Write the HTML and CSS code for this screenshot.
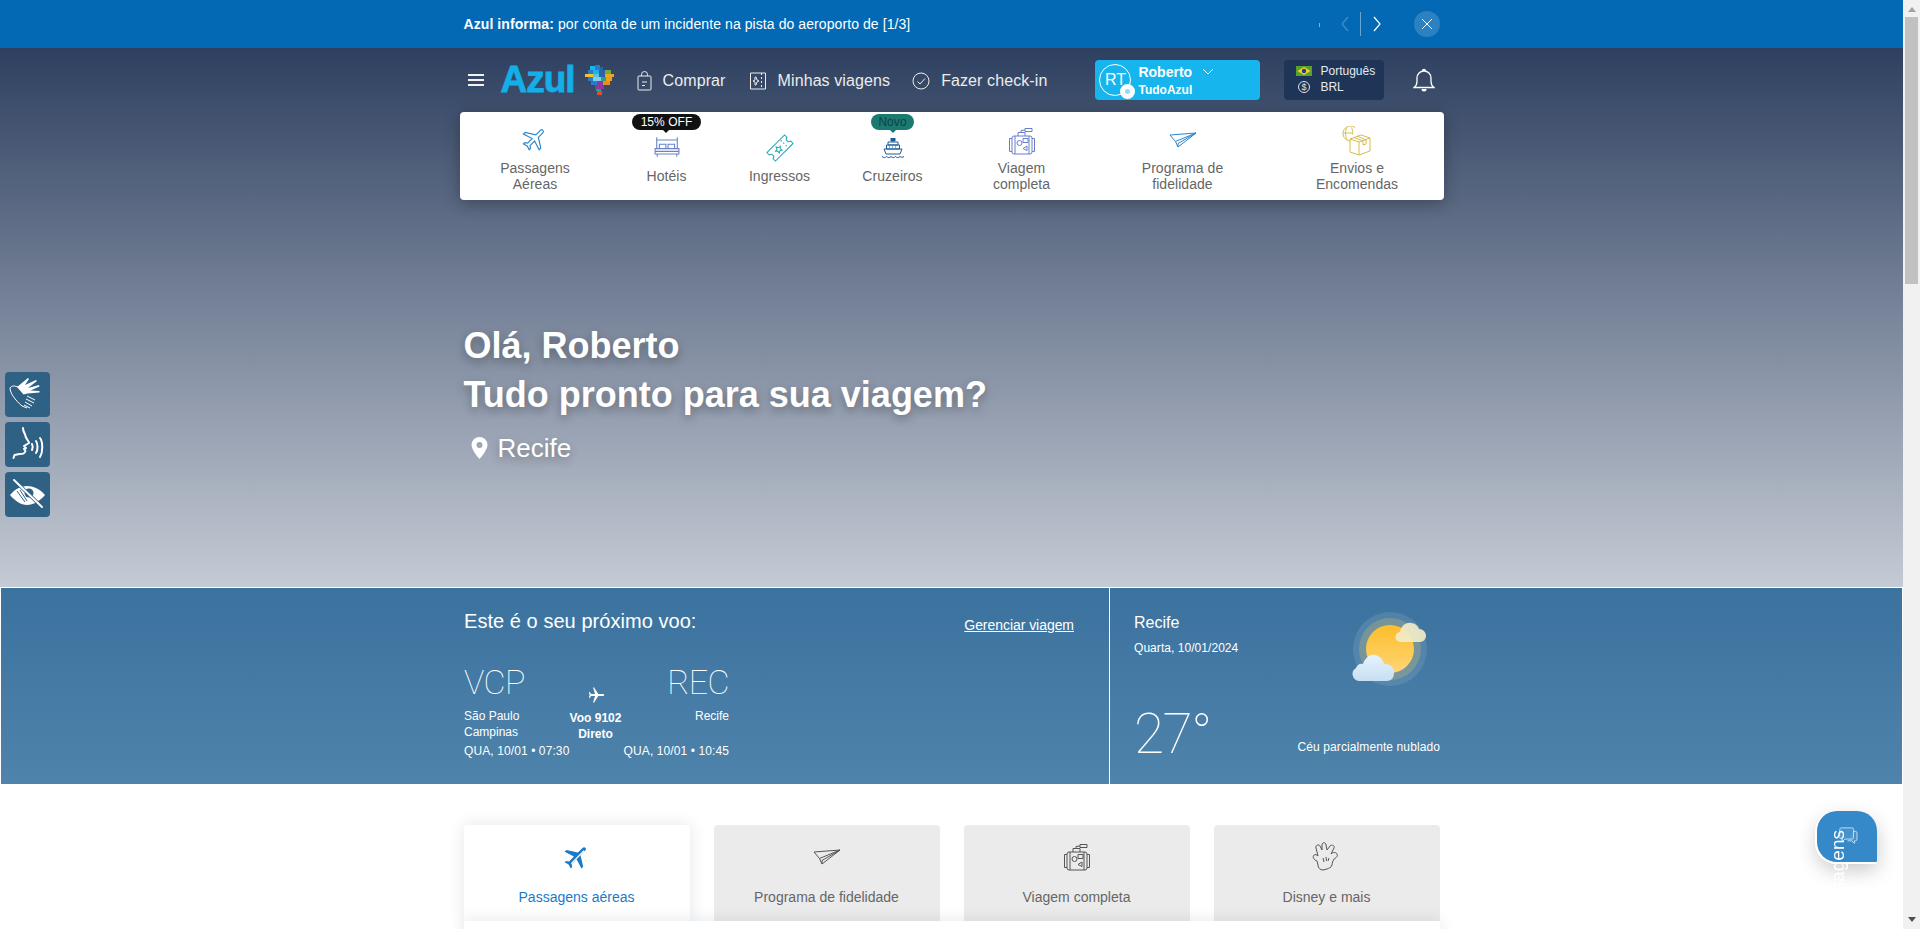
FILE: index.html
```html
<!DOCTYPE html>
<html lang="pt-BR">
<head>
  <meta charset="UTF-8">
  <title>Azul Linhas Aéreas</title>
  <meta name="viewport" content="width=device-width, initial-scale=1.0">
  <link rel="stylesheet" href="styles.css">
</head>
<body>
  <svg class="defs" width="0" height="0">
    <symbol id="i-plane" viewBox="0 0 24 24">
      <path d="M21 16v-2l-8-5V3.5c0-.83-.67-1.5-1.5-1.5S10 2.67 10 3.5V9l-8 5v2l8-2.5V19l-2 1.5V22l3.5-1 3.5 1v-1.5L13 19v-5.5l8 2.5z"/>
    </symbol>
    <symbol id="i-paper" viewBox="0 0 28 16">
      <path d="M1 3 27 1 9 15 6.5 9.5zM6.5 9.5 27 1 9 11.5 9 15"/>
    </symbol>
    <symbol id="i-suitcase" viewBox="0 0 28 30">
      <path d="M6 10h16a2 2 0 0 1 2 2v14a2 2 0 0 1-2 2H6a2 2 0 0 1-2-2V12a2 2 0 0 1 2-2zM7 10v18M21 10v18M1.500 12.500v13M26.500 12.500v13M4 12.500H1.500M4 25.500H1.500M24 12.500h2.500M24 25.500h2.500"/>
      <path d="M10 10V6.500h7V10M13 6.500V4.500l4-.5M17 2.500h7v3h-7z"/>
      <circle cx="11.500" cy="17" r="2.500"/>
      <path d="M15 12.500h5v4h-5zM19 20v4.500l-4-2z"/>
    </symbol>
  </svg>

  <div class="page">
    <div class="notice">
      <div class="wrap notice-in">
        <p class="notice-text"><b>Azul informa:</b> por conta de um incidente na pista do aeroporto de [1/3]</p>
        <div class="notice-ctrl">
          <span class="tick"></span>
          <svg class="chev dim" width="10" height="16" viewBox="0 0 10 16"><path d="M8 1 2 8l6 7"/></svg>
          <span class="sep"></span>
          <svg class="chev" width="10" height="16" viewBox="0 0 10 16"><path d="M2 1l6 7-6 7"/></svg>
          <span class="close">
            <svg width="12" height="12" viewBox="0 0 12 12"><path d="M1 1l10 10M11 1 1 11"/></svg>
          </span>
        </div>
      </div>
    </div>

    <section class="hero">
      <header class="wrap nav">
        <div class="nav-left">
          <span class="burger"><i></i><i></i><i></i></span>
          <span class="logo">Azul</span>
          <svg class="map" width="30" height="30" viewBox="0 0 30 30">
            <path fill="#19b5e8" d="M5 1h5v4H5z"/><path fill="#2a7cc8" d="M10 0h5v5h-5z"/><path fill="#2a63a8" d="M15 2h3v3h-3z"/>
            <path fill="#2a7cc8" d="M3 5h5v4H3z"/><path fill="#19b5e8" d="M8 5h6v4H8z"/><path fill="#2a63a8" d="M14 5h6v4h-6z"/><path fill="#76ab3f" d="M20 5h6v4h-6z"/>
            <path fill="#f3c62d" d="M0 9h8v3H0z"/><path fill="#5fc3e0" d="M8 9h6v3H8z"/><path fill="#2a63a8" d="M14 9h6v3h-6z"/><path fill="#e8a81c" d="M20 9h9v3h-9z"/>
            <path fill="#2a7cc8" d="M3 12h5v4H3z"/><path fill="#7fd0e8" d="M8 12h8v4H8z"/><path fill="#2c9e8f" d="M16 12h5v4h-5z"/><path fill="#f0a01e" d="M21 12h6v4h-6z"/>
            <path fill="#2a7cc8" d="M6 16h6v4H6z"/><path fill="#8a3a9c" d="M12 16h6v4h-6z"/><path fill="#f08a1e" d="M18 16h7v4h-7z"/>
            <path fill="#8a3a9c" d="M10 20h9v4h-9z"/><path fill="#2c9e8f" d="M11 24h5v2h-5z"/>
            <path fill="#e8482c" d="M12 26h5v4h-5z"/>
          </svg>
        </div>
        <nav class="nav-links">
          <a class="nav-link nl-buy">
            <svg width="15" height="20" viewBox="0 0 15 20"><path d="M2 5h11a1 1 0 0 1 1 1v12a1 1 0 0 1-1 1H2a1 1 0 0 1-1-1V6a1 1 0 0 1 1-1zM4.500 5V3.500a3 3 0 0 1 6 0V5M5 11h5M5 14.500h3"/></svg>
            Comprar
          </a>
          <a class="nav-link nl-trips">
            <svg width="18" height="18" viewBox="0 0 18 18"><path d="M1.500 1h15v16h-15zM12.500 1v2M12.500 5v2M12.500 9v2M12.500 13v2M4 9l2-1V5l1 0 1 3 2 1-2 1-1 3-1 0v-3z"/></svg>
            Minhas viagens
          </a>
          <a class="nav-link nl-check">
            <svg width="18" height="18" viewBox="0 0 18 18"><circle cx="9" cy="9" r="8"/><path d="M5.500 9.500l2.500 2.500 5-5.500"/></svg>
            Fazer check-in
          </a>
        </nav>
        <div class="user">
          <span class="avatar">RT<span class="avatar-badge"></span></span>
          <span class="user-txt">
            <b class="user-name">Roberto
              <svg width="12" height="7" viewBox="0 0 12 7"><path d="M1 1l5 5 5-5"/></svg>
            </b>
            <b class="user-club">TudoAzul</b>
          </span>
        </div>
        <div class="lang">
          <span class="lang-row">
            <svg class="lang-ico" width="16" height="10" viewBox="0 0 16 10"><path fill="#5aa02c" d="M0 0h16v10H0z"/><path fill="#f6d21f" d="M8 1l6.500 4L8 9 1.500 5z"/><circle cx="8" cy="5" r="2.200" fill="#1f3f8f"/></svg>
            Português
          </span>
          <span class="lang-row">
            <svg class="lang-ico" width="16" height="12" viewBox="0 0 16 12"><circle cx="8" cy="6" r="5.500" fill="none" stroke="#dfe4ea"/><text x="8" y="9" class="coin">$</text></svg>
            BRL
          </span>
        </div>
        <svg class="bell" width="22" height="25" viewBox="0 0 22 25"><path d="M1 19.500c2-1.500 3-3 3-6V10a7 7 0 0 1 14 0v3.500c0 3 1 4.500 3 6zM9.500 3a1.500 1.500 0 0 1 3 0"/><path class="bell-fill" d="M8.500 21h5a2.500 2.500 0 0 1-5 0z"/></svg>
      </header>

      <div class="menu">
        <a class="menu-item">
          <svg class="mi-plane" width="28" height="28"><use href="#i-plane"/></svg>
          <span>Passagens<br>Aéreas</span>
        </a>
        <a class="menu-item">
          <em class="flag flag-off">15% OFF</em>
          <svg class="mi-bed" width="26" height="24" viewBox="0 0 24 22"><path d="M2.500 13V2M21.500 13V2M2.500 4.500h19M5 12V8.500h6V12M13 12V8.500h6V12M1 12.500h22v5H1zM1 15h22M3 17.500V20M21 17.500V20"/></svg>
          <span>Hotéis</span>
        </a>
        <a class="menu-item">
          <svg class="mi-ticket" width="28" height="28" viewBox="0 0 28 28"><g transform="rotate(-45 14 14)"><path d="M1.500 8h25v3.500a2.500 2.500 0 0 0 0 5V20h-25v-3.500a2.500 2.500 0 0 0 0-5z"/><path d="M12 10.500l1 2.200 2.400.3-1.700 1.600.4 2.400-2.100-1.200-2.100 1.200.4-2.400-1.700-1.600 2.400-.3zM20 9v1.500M20 12.500V14M20 16v1.500"/></g></svg>
          <span>Ingressos</span>
        </a>
        <a class="menu-item">
          <em class="flag flag-new">Novo</em>
          <svg class="mi-ship" width="24" height="22" viewBox="0 0 24 22"><path class="solid" d="M10 0h4v3h-4z"/><path d="M7 4h10v3H7zM5.500 7h13v4h-13zM3 11h18l-2 5H5z"/><path d="M8 9h1M11 9h1M14 9h1M1 18.500c2 1.500 3 1.500 4.500 0 1.500 1.500 3 1.500 4.500 0 1.500 1.500 3 1.500 4.500 0 1.500 1.500 3 1.500 4.500 0 1 1 2.500 1 4 0"/></svg>
          <span>Cruzeiros</span>
        </a>
        <a class="menu-item">
          <svg class="mi-suit" width="28" height="30"><use href="#i-suitcase"/></svg>
          <span>Viagem<br>completa</span>
        </a>
        <a class="menu-item">
          <svg class="mi-paper" width="28" height="16"><use href="#i-paper"/></svg>
          <span>Programa de<br>fidelidade</span>
        </a>
        <a class="menu-item">
          <svg class="mi-box" width="30" height="30" viewBox="0 0 30 30"><path d="M8 13 17 16l11-4v13l-11 4-9-3zM17 16v13M28 12l-9-3-11 4M12 11.500l9 3.500v4l3-1v-4L15 10"/><path d="M8 15A7.500 7.500 0 1 1 13 1.500M1 7h9M5 1.500c-2 3-2 8 0 12M9.500 1.500c1 2 1.500 4 1 7"/></svg>
          <span>Envios e<br>Encomendas</span>
        </a>
      </div>

      <div class="wrap greet">
        <h1>Olá, Roberto<br>Tudo pronto para sua viagem?</h1>
        <p class="place">
          <svg width="17" height="22" viewBox="0 0 17 22"><path fill-rule="evenodd" d="M8.500 0A8 8 0 0 0 .5 8c0 5 8 14 8 14s8-9 8-14a8 8 0 0 0-8-8zm0 11a3 3 0 1 1 0-6 3 3 0 0 1 0 6z"/></svg>
          Recife
        </p>
      </div>
    </section>

    <section class="band">
      <div class="flight">
        <div class="flight-in">
          <div class="flight-head">
            <h2>Este é o seu próximo voo:</h2>
            <a class="manage">Gerenciar viagem</a>
          </div>
          <div class="route">
            <div class="stop">
              <strong class="iata">VCP</strong>
              <span class="city">São Paulo<br>Campinas</span>
              <span class="when">QUA, 10/01 • 07:30</span>
            </div>
            <div class="leg">
              <svg width="18" height="18" viewBox="0 0 24 24"><path d="M23 12c0-.8-1-1.200-2-1.200h-6L9.500 2H8l2.800 8.800H5.500L3.500 8H2.500l1 4-1 4h1l2-2.800h5.300L8 22h1.500l5.500-8.800h6c1 0 2-.4 2-1.200z"/></svg>
              <span>Voo 9102<br>Direto</span>
            </div>
            <div class="stop stop-end">
              <strong class="iata">REC</strong>
              <span class="city">Recife<br>&nbsp;</span>
              <span class="when">QUA, 10/01 • 10:45</span>
            </div>
          </div>
        </div>
      </div>
      <div class="weather">
        <div class="weather-top">
          <div>
            <h3>Recife</h3>
            <p class="date">Quarta, 10/01/2024</p>
          </div>
          <svg class="sun" width="78" height="76" viewBox="0 0 78 76">
            <defs>
              <linearGradient id="sun-g" x1="0" y1="0" x2="0" y2="1"><stop offset="0" stop-color="#fdbd2c"/><stop offset="1" stop-color="#fdd676"/></linearGradient>
              <linearGradient id="cloud-g" x1="0" y1="0" x2="0" y2="1"><stop offset="0" stop-color="#e6f3fc"/><stop offset="1" stop-color="#c6dff3"/></linearGradient>
            </defs>
            <circle cx="38" cy="37" r="37" fill="#fff" opacity=".1"/>
            <circle cx="38" cy="37" r="31" fill="#f6d35c" opacity=".22"/>
            <circle cx="38" cy="37" r="24" fill="url(#sun-g)"/>
            <path fill="#f1ecc8" opacity=".92" d="M49 30a5 5 0 0 1-1-10c1-6 6-10 11-9 4 0 7 3 8 6 4 0 7 3 7 7 0 3-3 6-6 6z"/>
            <path fill="url(#cloud-g)" d="M7 69a7 7 0 0 1-3-13c1-3 4-5 7-4 2-6 7-10 12-9 5 1 8 5 9 9 6 0 10 3 10 9 0 5-3 8-7 8z"/>
          </svg>
        </div>
        <div class="weather-low">
          <strong class="temp">27°</strong>
          <span class="sky">Céu parcialmente nublado</span>
        </div>
      </div>
    </section>

    <section class="wrap tabs">
      <a class="tab on">
        <svg class="tab-plane" width="30" height="30" viewBox="0 0 24 24">
          <path d="M21 16v-2l-8-5V3.500c0-.83-.67-1.500-1.500-1.500S10 2.670 10 3.500V9l-8 5v2l8-2.500V19l-2 1.500V22l3.500-1 3.500 1v-1.500L13 19v-5.500l8 2.500z"/>
          <path class="streak" d="M12.500 4.500V19"/>
        </svg>
        Passagens aéreas
      </a>
      <a class="tab">
        <svg class="tab-ico-paper" width="28" height="16"><use href="#i-paper"/></svg>
        Programa de fidelidade
      </a>
      <a class="tab">
        <svg class="tab-ico" width="28" height="30"><use href="#i-suitcase"/></svg>
        Viagem completa
      </a>
      <a class="tab">
        <svg class="tab-ico" width="30" height="30" viewBox="0 0 30 30"><path d="M11 28c-3 0-5-2-5-5l-1-4c-3-1-5-4-3-6 1-1 3 0 4 1L4 6c-1-3 3-4 4-2l2 4V3c0-3 4-3 4 0l1 5 3-4c2-2 5 0 4 2l-3 6c2-2 5-2 6 0 1 2-1 4-3 5-1 2-2 4-2 6-1 3-3 3-5 4z"/><path d="M11 16l1 4M14 15l.5 4M17 16l-1 3"/></svg>
        Disney e mais
      </a>
    </section>
    <div class="wrap panel"></div>
  </div>

  <aside class="scrollbar">
    <i class="arrow up"></i>
    <i class="thumb"></i>
    <i class="arrow down"></i>
  </aside>

  <div class="a11y">
    <a class="a11y-btn">
      <svg width="45" height="45" viewBox="0 0 45 45">
        <path class="s-fill" d="M12 15l11-9 1 1-4 6 11-5 1 1-9 7 11-3 .5 1.500-9 4 9 .5 0 1.500-12 1-4 1z"/>
        <path class="s-line" d="M5 16c2-3 5-2 8-1M5 16c0 5 5 12 12 18M17 34l5 2M22 24l8 4M21 27l8 4M20 30l7 4M19 33l6 3"/>
      </svg>
    </a>
    <a class="a11y-btn">
      <svg width="45" height="45" viewBox="0 0 45 45">
        <path class="s-thick" d="M18 6c0 4 2 5 2.500 8s3.500 5 3.500 7l-5 3 2 2-2 1 1.500 2c-1 3-3 3-6 3l-5 1-1 3"/>
        <path class="s-thick" d="M27 22c1 2 1 4 0 6M31 19c2 3 2 9 0 12M35 16c3 4 3 14 0 19"/>
      </svg>
    </a>
    <a class="a11y-btn">
      <svg width="45" height="45" viewBox="0 0 45 45">
        <path class="s-fill" d="M5 23c5-6 11-9 17-9s13 3 18 9c-5 6-12 10-18 10S10 29 5 23z"/>
        <circle cx="24" cy="21" r="4.500" fill="#2e6184"/>
        <path class="s-hatch" d="M12 19l8 11M15 18l7 11M18 17l3 4"/>
        <path class="s-cut" d="M9 8l28 27"/>
        <path class="s-thick" d="M9 8l28 27"/>
      </svg>
    </a>
  </div>

  <a class="fab">
    <svg width="21" height="19" viewBox="0 0 24 22"><path d="M5 1h12a2 2 0 0 1 2 2v9a2 2 0 0 1-2 2H9l-3 3v-3H5a2 2 0 0 1-2-2V3a2 2 0 0 1 2-2z"/><path d="M19 5h2a2 2 0 0 1 2 2v7a2 2 0 0 1-2 2h-1v3l-3-3h-5"/></svg>
    <span class="fab-text">Mensagens</span>
  </a>
</body>
</html>
```

FILE: styles.css
```css
* { box-sizing: border-box; }
html, body { margin: 0; height: 929px; overflow: hidden; }
body { display: flex; font-family: "Liberation Sans", Arial, sans-serif; background: #fff; color: #666; }
a { color: inherit; text-decoration: none; }
p, h1, h2, h3 { margin: 0; font-weight: normal; }
.defs { position: absolute; }

.page { width: 1903px; flex: none; }
.wrap { width: 976px; margin: 0 auto; }

/* aviso */
.notice { height: 48px; background: #0369b5; color: #fff; }
.notice-in { height: 48px; display: flex; align-items: center; justify-content: space-between; }
.notice-text { font-size: 14px; letter-spacing: .08px; }
.notice-ctrl { display: flex; align-items: center; }
.tick { width: 1px; height: 4px; margin-top: 2px; background: rgba(255,255,255,.5); }
.chev { margin-left: 20px; fill: none; stroke: #fff; stroke-width: 1.2; }
.chev.dim { opacity: .25; }
.sep { width: 1px; height: 24px; margin-left: 10px; background: rgba(255,255,255,.4); }
.sep + .chev { margin-left: 11px; }
.close { width: 26px; height: 26px; margin-left: 32px; border-radius: 50%; background: rgba(255,255,255,.16); display: flex; align-items: center; justify-content: center; }
.close svg { fill: none; stroke: #fff; stroke-width: 1; }

/* hero */
.hero { height: 539px; background: linear-gradient(#2e4060, #c5cbd5); }
.nav { height: 64px; padding-top: 12px; display: flex; align-items: flex-start; color: #ececec; }
.nav-left { display: flex; align-items: center; height: 40px; padding-left: 4px; }
.burger { width: 16px; display: flex; flex-direction: column; gap: 3.5px; }
.burger i { height: 1.500px; background: #f2f2f2; }
.logo { margin-left: 17px; font-size: 37px; font-weight: bold; letter-spacing: -1px; color: #14aee9; line-height: 42px; -webkit-text-stroke: .8px #14aee9; }
.map { margin: 0 0 0 10px; }
.nav-links { display: flex; height: 40px; align-items: center; margin: 1px 0 0 22px; }
.nav-link { display: flex; align-items: center; font-size: 16px; letter-spacing: .1px; }
.nav-link svg { fill: none; stroke: #ececec; stroke-width: 1; margin-right: 11px; }
.nl-trips { margin-left: 23px; }
.nl-check { margin-left: 22px; }
.user { width: 165px; height: 40px; margin-left: 48px; padding-left: 4px; display: flex; align-items: center; background: #17b5ee; border-radius: 4px; color: #fff; }
.avatar { position: relative; width: 32px; height: 32px; border: 1px solid #fff; border-radius: 50%; font-size: 16px; line-height: 30px; text-align: center; }
.avatar-badge { position: absolute; right: -5px; bottom: -4px; width: 15px; height: 15px; border: 3px solid #fff; border-radius: 50%; background: #8fdaf6; box-shadow: inset 0 0 0 2px #fff; }
.user-txt { display: flex; flex-direction: column; margin-left: 7px; }
.user-name { font-size: 14px; line-height: 18px; }
.user-name svg { margin-left: 6px; fill: none; stroke: #fff; stroke-width: 1; vertical-align: 2px; }
.user-club { font-size: 12px; line-height: 14px; margin-top: 2px; }
.lang { width: 100px; height: 40px; margin-left: 24px; padding: 3px 0 0 12px; background: #1e3557; border-radius: 4px; font-size: 12px; color: #e6e9ee; }
.lang-row { display: flex; align-items: center; height: 16px; }
.lang-ico { margin-right: 8px; }
.coin { font: 9px "Liberation Sans", sans-serif; fill: #dfe4ea; text-anchor: middle; }
.bell { margin: 8px 0 0 29px; fill: none; stroke: #fff; stroke-width: 1.300; }
.bell-fill { fill: #fff; stroke: none; }

/* menu de produtos */
.menu { width: 984px; height: 88px; margin: 0 auto; display: grid; grid-template-columns: 151px 112px 114px 112px 146px 176px 173px; background: #fff; border-radius: 4px; box-shadow: 0 4px 16px rgba(0,0,0,.3); }
.menu-item { position: relative; display: flex; flex-direction: column; align-items: center; font-size: 14px; letter-spacing: .05px; line-height: 16px; text-align: center; color: #666; }
.menu-item svg { position: absolute; fill: none; stroke-width: 1; }
.menu-item span { margin-top: 48px; }
.menu-item:nth-child(2) span, .menu-item:nth-child(3) span, .menu-item:nth-child(4) span { margin-top: 56px; }
.mi-plane { top: 13px; stroke: #2a86cf; transform: rotate(45deg); }
.mi-bed { top: 23px; stroke: #6a83c8; }
.mi-ticket { top: 22px; stroke: #27a6b5; }
.mi-ship { top: 26px; stroke: #1c5d96; }
.mi-ship .solid { fill: #1c5d96; }
.mi-suit { top: 14px; stroke: #6a7fca; }
.mi-paper { top: 20px; stroke: #2a86cf; }
.mi-box { top: 14px; stroke: #d6bd4f; }
.flag { position: absolute; top: 2px; height: 16px; padding: 0 9px; border-radius: 8px; font-style: normal; font-size: 12px; line-height: 16px; }
.flag::after { content: ""; position: absolute; left: 50%; bottom: -3px; margin-left: -4px; border: 4px solid transparent; border-bottom: 0; border-top-color: inherit; }
.flag-off { background: #111; color: #fff; border-top-color: #111; }
.flag-new { background: #1b7a70; color: #123e4a; border-top-color: #1b7a70; padding: 0 7px; }

/* saudacao */
.greet { padding-top: 121px; color: #fff; text-shadow: 0 4px 10px rgba(0,0,0,.3); }
.greet h1 { font-size: 36px; line-height: 49px; font-weight: bold; }
.place { display: flex; align-items: center; margin-top: 11px; padding-left: 7px; font-size: 26px; line-height: 36px; }
.place svg { fill: #fff; margin-right: 10px; }

/* proximo voo */
.band { height: 197px; display: flex; background: linear-gradient(#3b729e, #4e83ab); border: 1px solid #fff; border-bottom: 0; color: #fff; }
.flight { width: 1109px; padding-left: 463px; border-right: 1px solid #fff; }
.flight-in { width: 610px; }
.flight-head { display: flex; justify-content: space-between; padding-top: 21px; }
.flight-head h2 { font-size: 20px; line-height: 24px; letter-spacing: .05px; }
.manage { margin-top: 4px; font-size: 14px; letter-spacing: -.05px; line-height: 24px; text-decoration: underline; }
.route { display: flex; width: 265px; margin-top: 25px; justify-content: space-between; }
.stop { display: flex; flex-direction: column; font-size: 12px; }
.stop-end { align-items: flex-end; text-align: right; }
.iata { font-family: Roboto, sans-serif; font-weight: 100; font-size: 34px; line-height: 40px; letter-spacing: -.6px; }
.city { margin-top: 6px; line-height: 16px; }
.when { margin-top: 3px; letter-spacing: .1px; line-height: 16px; white-space: nowrap; }
.leg { position: relative; display: flex; flex-direction: column; align-items: center; padding-top: 24px; margin-left: -36px; margin-right: -34px; font-size: 12px; font-weight: bold; line-height: 16px; text-align: center; }
.leg svg { fill: #fff; margin-bottom: 6px; }
.weather { flex: 1; padding: 0 0 0 24px; width: 331px; }
.weather-top { width: 306px; height: 116px; padding-top: 24px; display: flex; justify-content: space-between; }
.weather-top h3 { font-size: 16px; line-height: 22px; }
.date { margin-top: 6px; font-size: 12px; letter-spacing: .05px; line-height: 16px; }
.sun { margin: 0 10px 0 0; }
.weather-low { width: 306px; display: flex; justify-content: space-between; align-items: flex-end; }
.temp { font-family: Roboto, sans-serif; font-weight: 100; font-size: 55px; line-height: 60px; letter-spacing: -1.500px; }
.sky { font-size: 12px; letter-spacing: .1px; line-height: 16px; margin-bottom: 9px; }

/* abas */
.tabs { display: flex; justify-content: space-between; margin-top: 41px; }
.tab { position: relative; width: 226px; height: 96px; display: flex; flex-direction: column; align-items: center; padding-top: 17px; background: #ebebeb; border-radius: 4px 4px 0 0; font-size: 14px; color: #666; }
.tab svg { height: 30px; margin-bottom: 17px; fill: none; stroke: #555; stroke-width: 1; }
.tab.on { background: #fff; color: #1a7bc9; box-shadow: 0 0 16px rgba(20,40,80,.12); }
.tab-plane { fill: #1a7bc9 !important; stroke: none !important; transform: rotate(45deg); }
.streak { fill: none; stroke: #fff; stroke-width: 1; }
.tab-ico-paper { padding: 7px 0; }
.panel { position: relative; height: 20px; background: #fff; box-shadow: 0 0 16px rgba(20,40,80,.12); }

/* barra de rolagem */
.scrollbar { width: 17px; height: 929px; flex: none; display: flex; flex-direction: column; align-items: center; background: #f1f1f1; }
.thumb { width: 13px; height: 267px; margin-top: 5px; background: #c1c1c1; }
.arrow { width: 0; border: 4px solid transparent; border-left-width: 4px; }
.arrow.up { margin-top: 7px; border-top: 0; border-bottom: 5px solid #a3a3a3; }
.arrow.down { margin-top: auto; margin-bottom: 7px; border-bottom: 0; border-top: 5px solid #505050; }

/* acessibilidade */
.a11y { position: fixed; left: 5px; top: 372px; display: flex; flex-direction: column; gap: 5px; }
.a11y-btn { width: 45px; height: 45px; background: #2e6184; border-radius: 4px; }
.s-fill { fill: #fff; }
.s-line { fill: none; stroke: #fff; stroke-width: 1; }
.s-thick { fill: none; stroke: #fff; stroke-width: 2; stroke-linecap: round; stroke-linejoin: round; }
.s-hatch { fill: none; stroke: #2e6184; stroke-width: 1; }
.s-cut { fill: none; stroke: #2e6184; stroke-width: 3.500; }

/* mensagens */
.fab { position: fixed; left: 1817px; top: 811px; width: 60px; height: 51px; background: #3689c8; border-radius: 20px 20px 1px 20px; box-shadow: -1px 1px 0 1px #fff, 0 8px 20px rgba(0,0,0,.22); }
.fab svg { position: absolute; left: 20px; top: 16px; fill: rgba(255,255,255,.08); stroke: #cfe5f6; stroke-width: 1; }
.fab-text { position: absolute; left: 8px; top: 19px; color: #fff; font-size: 19px; line-height: 26px; writing-mode: vertical-rl; transform: rotate(180deg); }
```
